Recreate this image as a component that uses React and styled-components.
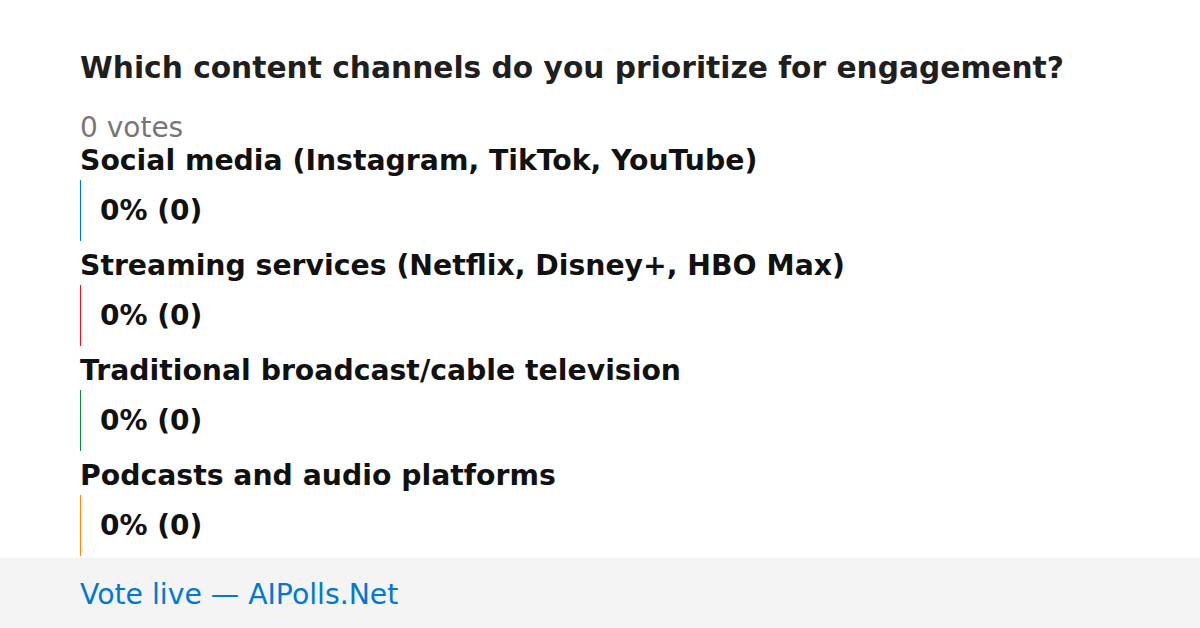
import React from "react";
import styled, { createGlobalStyle } from "styled-components";

const GlobalStyle = createGlobalStyle`
  html, body {
    margin: 0;
    padding: 0;
    background: #fff;
  }
  body {
    font-family: "DejaVu Sans", "Noto Sans", sans-serif;
  }
`;

const options = [
  { id: 1, label: "Social media (Instagram, TikTok, YouTube)", color: "#0078d4" },
  { id: 2, label: "Streaming services (Netflix, Disney+, HBO Max)", color: "#e81123" },
  { id: 3, label: "Traditional broadcast/cable television", color: "#10893e" },
  { id: 4, label: "Podcasts and audio platforms", color: "#ff8c00" },
];

function App() {
  return (
    <>
      <GlobalStyle />
      <StPage>
        <StMain>
          <StTitle>Which content channels do you prioritize for engagement?</StTitle>
          <StVotes>0 votes</StVotes>
          {options.map((option) => {
            return (
              <StOption key={option.id}>
                <StLabel>{option.label}</StLabel>
                <StBar color={option.color}>0% (0)</StBar>
              </StOption>
            );
          })}
        </StMain>
        <StFooter>Vote live — AIPolls.Net</StFooter>
      </StPage>
    </>
  );
}

const StPage = styled.div`
  width: 1200px;
  height: 628px;
  display: flex;
  flex-direction: column;
  overflow: hidden;
`;
const StMain = styled.div`
  flex: 1;
  min-height: 0;
  overflow: hidden;
  padding: 48px 80px 0;
  display: flex;
  flex-direction: column;
`;
const StTitle = styled.h1`
  margin: 0;
  font-size: 29.7px;
  line-height: 40px;
  font-weight: bold;
  color: #1f1f1f;
  white-space: nowrap;
`;
const StVotes = styled.div`
  margin-top: 24px;
  font-size: 28px;
  line-height: 31px;
  color: #777;
`;
const StOption = styled.div`
  display: flex;
  flex-direction: column;
  flex-shrink: 0;
  margin-bottom: 7px;
`;
const StLabel = styled.div`
  font-size: 28.3px;
  line-height: 32px;
  height: 32px;
  padding-top: 2px;
  margin-bottom: 3px;
  font-weight: bold;
  color: #111;
  white-space: nowrap;
`;
const StBar = styled.div`
  height: 61px;
  border-left: 1px solid ${(props) => props.color};
  padding-left: 19px;
  display: flex;
  align-items: center;
  font-size: 28px;
  font-weight: bold;
  color: #111;
`;
const StFooter = styled.div`
  height: 70px;
  flex-shrink: 0;
  box-sizing: border-box;
  background: #f4f4f4;
  padding: 3px 80px 0;
  display: flex;
  align-items: center;
  font-size: 28.3px;
  color: #0078d4;
`;

export default App;
